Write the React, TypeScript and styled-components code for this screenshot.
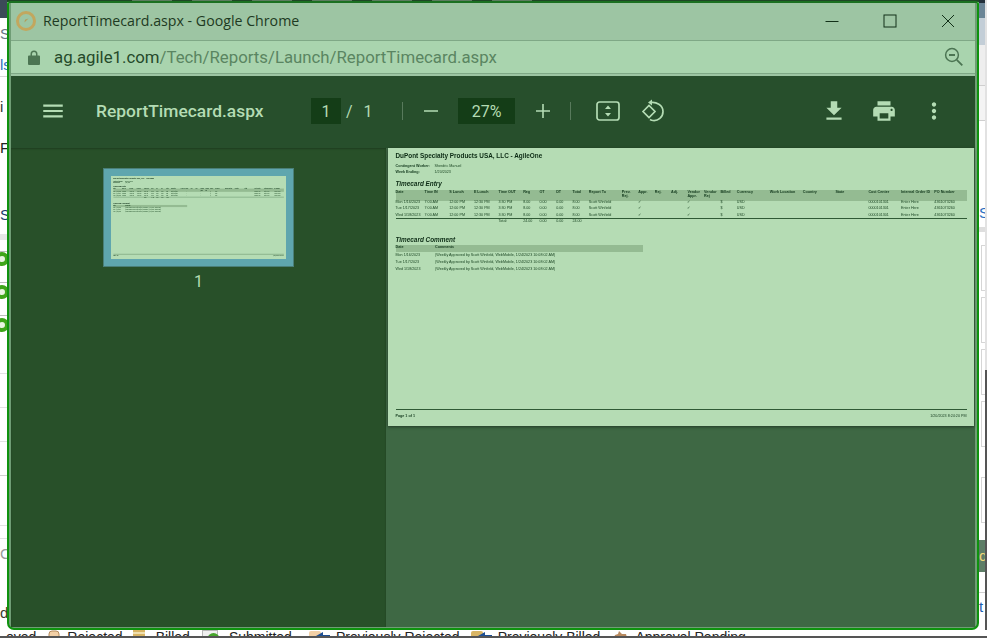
import React from 'react';
import styled, { createGlobalStyle } from 'styled-components';

const GlobalStyle = createGlobalStyle`
  html, body {
    margin: 0;
    padding: 0;
    background: #fff;
    font-family: "Liberation Sans", Arial, sans-serif;
  }
`;

interface StripItem {
  h: number;
  bg?: string;
  text?: string;
  color?: string;
  check?: boolean;
  box?: boolean;
}

const leftStrip: StripItem[] = [
  { h: 18, bg: '#3c4a58' },
  { h: 9 },
  { h: 13, text: 'S', color: '#6b7785' },
  { h: 18 },
  { h: 13, text: 'ls', color: '#2a6fc0' },
  { h: 5 },
  { h: 1, bg: '#d8d8d8' },
  { h: 23 },
  { h: 14, text: 'i', color: '#333' },
  { h: 27 },
  { h: 14, text: 'F', color: '#222' },
  { h: 52 },
  { h: 16, text: 'St', color: '#1c3d6b' },
  { h: 11 },
  { h: 6, bg: '#e6e6e6' },
  { h: 11 },
  { h: 1, bg: '#bdbdbd' },
  { h: 14, check: true },
  { h: 16 },
  { h: 1, bg: '#bdbdbd' },
  { h: 2 },
  { h: 14, check: true },
  { h: 16 },
  { h: 1, bg: '#bdbdbd' },
  { h: 2 },
  { h: 14, check: true },
  { h: 41 },
  { h: 1, bg: '#e2e2e2' },
  { h: 33 },
  { h: 1, bg: '#e2e2e2' },
  { h: 33 },
  { h: 1, bg: '#e2e2e2' },
  { h: 33 },
  { h: 1, bg: '#d0d0d0' },
  { h: 49 },
  { h: 1, bg: '#e2e2e2' },
  { h: 12 },
  { h: 1, bg: '#e2e2e2' },
  { h: 8 },
  { h: 13, text: 'Ca', color: '#9a9a9a' },
  { h: 46 },
  { h: 14, text: 'ds', color: '#3c3c2c' },
];

const rightStrip: StripItem[] = [
  { h: 3, bg: '#222f3a' },
  { h: 15, bg: '#6b8596' },
  { h: 27, bg: '#c3ced7' },
  { h: 40, bg: '#eeeeee' },
  { h: 1, bg: '#cfcfcf' },
  { h: 34, bg: '#f4f4f4' },
  { h: 1, bg: '#cfcfcf' },
  { h: 85 },
  { h: 13, text: 'S', color: '#2a6fc0' },
  { h: 8 },
  { h: 5, bg: '#dedede' },
  { h: 13 },
  { h: 46, box: true },
  { h: 6 },
  { h: 46, box: true },
  { h: 6 },
  { h: 46, box: true },
  { h: 6 },
  { h: 46, box: true },
  { h: 30 },
  { h: 46, box: true },
  { h: 17 },
  { h: 32, bg: '#5d7d66', text: 'd', color: '#f0d777' },
  { h: 20 },
  { h: 1, bg: '#d0d0d0' },
  { h: 7 },
  { h: 14, text: 't', color: '#1e5fb0' },
];

const LegendGlyph: React.FC<{ kind: string }> = ({ kind }) => {
  if (kind === 'rejected') {
    return (
      <LegendSvg width="12" height="8" $gap={7}>
        <path d="M1 8V4q0-3 3-3h4q3 0 3 3v4z" fill="#f3d0a6" stroke="#b58a5c" />
      </LegendSvg>
    );
  }
  if (kind === 'billed') {
    return (
      <LegendSvg width="12" height="8" $gap={11}>
        <path d="M0 0h12v2H0zM0 4h12v2H0z" fill="#d9b564" />
        <path d="M0 2h12v2H0z" fill="#f0dfae" />
      </LegendSvg>
    );
  }
  if (kind === 'submitted') {
    return (
      <LegendSvg width="18" height="8" $gap={9}>
        <rect x="0.500" y="0.500" width="15" height="7" fill="#f0f0f0" stroke="#b8b8b8" />
        <circle cx="11.500" cy="9" r="6" fill="#46a52a" />
      </LegendSvg>
    );
  }
  if (kind === 'prevRejected' || kind === 'prevBilled') {
    const base = kind === 'prevRejected' ? '#f3d0a6' : '#d9b564';
    return (
      <LegendSvg width="21" height="8" $gap={6}>
        <rect x="0" y="1" width="12" height="7" rx="2" fill={base} />
        <path d="M14 2l-7 4 3 2h11V5h-7z" fill="#1d4f94" />
      </LegendSvg>
    );
  }
  if (kind === 'pending') {
    return (
      <LegendSvg width="14" height="8" $gap={8}>
        <path d="M6 1l3 3h4l1 4H1l1-3 3-1z" fill="#b98a5f" />
      </LegendSvg>
    );
  }
  return null;
};

const legend = [
  { label: 'oved', icon: '', offset: 6 },
  { label: 'Rejected', icon: 'rejected', offset: 12 },
  { label: 'Billed', icon: 'billed', offset: 10 },
  { label: 'Submitted', icon: 'submitted', offset: 12 },
  { label: 'Previously Rejected', icon: 'prevRejected', offset: 17 },
  { label: 'Previously Billed', icon: 'prevBilled', offset: 11 },
  { label: 'Approval Pending', icon: 'pending', offset: 13 },
];

const days = ['Mon 1/16/2023', 'Tue 1/17/2023', 'Wed 1/18/2023'];

const headers = [
  'Date', 'Time IN', 'S Lunch', 'E Lunch', 'Time OUT', 'Reg', 'OT', 'DT', 'Total', 'Report To',
  'Prev. Rej.', 'Appr.', 'Rej.', 'Adj.', 'Vendor Appr.', 'Vendor Rej', 'Billed', 'Currency',
  'Work Location', 'Country', 'State', 'Cost Center', 'Internal Order ID', 'PO Number',
];

const rowCells = (day: string) => [
  day, '7:00 AM', '12:00 PM', '12:30 PM', '3:30 PM', '8.00', '0.00', '0.00', '8.00', 'Scott Winfield',
  '', '✓', '', '', '✓', '', '$', 'USD', '', '', '', '0000101301', 'Enter Here', '4361073260',
];

const totalCells = [
  '', '', '', '', 'Total:', '24.00', '0.00', '0.00', '24.00', '', '', '', '', '', '', '', '', '', '', '', '', '', '', '',
];

const ReportSheet: React.FC = () => (
  <SheetBody>
    <SheetTitle>DuPont Specialty Products USA, LLC - AgileOne</SheetTitle>
    <MetaBlock>
      <MetaRow>
        <MetaLabel>Contingent Worker:</MetaLabel>
        <span>Sherdric Manuel</span>
      </MetaRow>
      <MetaRow>
        <MetaLabel>Week Ending:</MetaLabel>
        <span>1/20/2023</span>
      </MetaRow>
    </MetaBlock>
    <SectionTitle>Timecard Entry</SectionTitle>
    <EntryHeader>
      {headers.map((h) => (
        <span key={h}>{h}</span>
      ))}
    </EntryHeader>
    <EntryRows>
      {days.map((day) => (
        <EntryRow key={day}>
          {rowCells(day).map((cell, i) => (
            <span key={i}>{cell}</span>
          ))}
        </EntryRow>
      ))}
    </EntryRows>
    <EntryTotal>
      {totalCells.map((cell, i) => (
        <span key={i}>{cell}</span>
      ))}
    </EntryTotal>
    <CommentTitle>Timecard Comment</CommentTitle>
    <CommentHeader>
      <span>Date</span>
      <span>Comments</span>
    </CommentHeader>
    {days.map((day) => (
      <CommentRow key={day}>
        <span>{day}</span>
        <span>(Weekly Approved by Scott Winfield, WebMobile, 1/24/2023 10:08:02 AM)</span>
      </CommentRow>
    ))}
    <SheetFooter>
      <b>Page 1 of 1</b>
      <span>1/20/2023 8:24:20 PM</span>
    </SheetFooter>
  </SheetBody>
);

const Strip: React.FC<{ items: StripItem[]; scrollbar?: boolean }> = ({ items, scrollbar }) => (
  <StripColumn $scrollbar={scrollbar}>
    {items.map((item, i) => (
      <StripCell key={i} $h={item.h} $bg={item.bg} $color={item.color} $box={item.box}>
        {item.text}
        {item.check && <CheckDot />}
      </StripCell>
    ))}
  </StripColumn>
);

const App: React.FC = () => (
  <Page>
    <GlobalStyle />
    <Strip items={leftStrip} />
    <Behind>
      {[125, 195, 250, 330, 410, 550, 640].map((x, i) => (
        <NavStub key={x} $left={i === 0 ? x : 20} />
      ))}
    </Behind>
    <Strip items={rightStrip} scrollbar />
    <LegendBar>
      {legend.map((item) => (
        <LegendItem key={item.label} $offset={item.offset}>
          <LegendGlyph kind={item.icon} />
          {item.label}
        </LegendItem>
      ))}
    </LegendBar>

    <Window>
      <TitleBar>
        <svg width="22" height="22" viewBox="0 0 22 22">
          <circle cx="11" cy="11" r="8.500" fill="none" stroke="#c2a75e" strokeWidth="3" />
          <path d="M13.500 8.500l-3.500 1.200-.6 2.800z" fill="#b49a55" />
        </svg>
        <WindowTitle>ReportTimecard.aspx - Google Chrome</WindowTitle>
        <WindowControls>
          <svg width="14" height="14" viewBox="0 0 14 14">
            <path d="M0.500 7.500h13" stroke="#123018" strokeWidth="1" />
          </svg>
          <svg width="14" height="14" viewBox="0 0 14 14">
            <rect x="1" y="1" width="12" height="12" fill="none" stroke="#123018" strokeWidth="1" />
          </svg>
          <svg width="14" height="14" viewBox="0 0 14 14">
            <path d="M1 1l12 12M13 1L1 13" stroke="#123018" strokeWidth="1" />
          </svg>
        </WindowControls>
      </TitleBar>
      <AddressBar>
        <svg width="12" height="15" viewBox="0 0 12 15">
          <path d="M2.500 5.500V4a3.500 3.500 0 0 1 7 0v1.500H11a1 1 0 0 1 1 1V14a1 1 0 0 1-1 1H1a1 1 0 0 1-1-1V6.500a1 1 0 0 1 1-1zM4 5.500h4V4a2 2 0 0 0-4 0z" fill="#4c7553" />
        </svg>
        <Url>
          <b>ag.agile1.com</b>/Tech/Reports/Launch/ReportTimecard.aspx
        </Url>
        <svg width="20" height="20" viewBox="0 0 20 20">
          <circle cx="8" cy="8" r="6.400" fill="none" stroke="#4c7553" strokeWidth="1.500" />
          <path d="M5 8h6M12.800 12.800l5.500 5.500" stroke="#4c7553" strokeWidth="1.800" />
        </svg>
      </AddressBar>
      <Toolbar>
        <ToolIcon $size={26} viewBox="0 0 24 24">
          <path d="M3 18h18v-2H3v2zm0-5h18v-2H3v2zm0-7v2h18V6H3z" />
        </ToolIcon>
        <DocTitle>ReportTimecard.aspx</DocTitle>
        <PageGroup>
          <ValueBox $width={30}>1</ValueBox>
          <Slash>/</Slash>
          <PageTotal>1</PageTotal>
        </PageGroup>
        <Separator />
        <ZoomButton $size={24} viewBox="0 0 24 24">
          <path d="M19 12.800H5v-1.600h14z" />
        </ZoomButton>
        <ZoomValue $width={57}>27%</ZoomValue>
        <ZoomButton $size={24} viewBox="0 0 24 24">
          <path d="M19 12.800h-6.200V19h-1.600v-6.200H5v-1.600h6.200V5h1.600v6.200H19z" />
        </ZoomButton>
        <Separator />
        <FitIcon $size={28} viewBox="0 0 28 28">
          <rect x="3" y="5" width="22" height="18" rx="2.500" fill="none" stroke="#b4dcb4" strokeWidth="1.700" />
          <path d="M14 8.500l3 3.500h-6zM14 19.500l3-3.500h-6z" />
        </FitIcon>
        <RotateIcon $size={28} viewBox="0 0 28 28">
          <path d="M4 14.500l6-6 6 6-6 6z" fill="none" stroke="#b4dcb4" strokeWidth="1.700" />
          <path
            d="M12 5.500c5-.6 12 2 12 9 0 6-5 9.500-10 9-1 0-2-.4-3-1"
            fill="none"
            stroke="#b4dcb4"
            strokeWidth="1.700"
          />
          <path d="M13 2.500v6l-4-3z" />
        </RotateIcon>
        <RightTools>
          <ToolIcon $size={26} viewBox="0 0 24 24">
            <path d="M19 9h-4V3H9v6H5l7 7 7-7zM5 18v2h14v-2H5z" />
          </ToolIcon>
          <ToolIcon $size={26} viewBox="0 0 24 24">
            <path d="M19 8H5c-1.660 0-3 1.340-3 3v6h4v4h12v-4h4v-6c0-1.660-1.340-3-3-3zm-3 11H8v-5h8v5zm3-7c-.550 0-1-.450-1-1s.450-1 1-1 1 .450 1 1-.450 1-1 1zm-1-9H6v4h12V3z" />
          </ToolIcon>
          <ToolIcon $size={26} viewBox="0 0 24 24">
            <path d="M12 8c1.100 0 2-.900 2-2s-.900-2-2-2-2 .900-2 2 .900 2 2 2zm0 2c-1.100 0-2 .900-2 2s.900 2 2 2 2-.900 2-2-.900-2-2-2zm0 6c-1.100 0-2 .900-2 2s.900 2 2 2 2-.900 2-2-.900-2-2-2z" />
          </ToolIcon>
        </RightTools>
      </Toolbar>
      <ViewerArea>
        <Sidebar>
          <Thumb>
            <ThumbPage>
              <ThumbScale>
                <ReportSheet />
              </ThumbScale>
            </ThumbPage>
          </Thumb>
          <ThumbLabel>1</ThumbLabel>
        </Sidebar>
        <Viewer>
          <Sheet>
            <ReportSheet />
          </Sheet>
        </Viewer>
      </ViewerArea>
    </Window>
  </Page>
);

const Page = styled.div`
  position: relative;
  width: 987px;
  height: 638px;
  overflow: hidden;
  display: grid;
  grid-template-columns: 7px 1fr 8px;
  grid-template-rows: 630px 8px;
  background: #fff;
`;

const StripColumn = styled.div<{ $scrollbar?: boolean }>`
  display: flex;
  flex-direction: column;
  overflow: hidden;
  background: #fff;
  box-sizing: border-box;
  ${(p) =>
    p.$scrollbar &&
    `
    border-right: 2px solid;
    border-image: linear-gradient(#e2e2e2 0 370px, #555 370px) 1;
  `}
`;

const StripCell = styled.div<{ $h: number; $bg?: string; $color?: string; $box?: boolean }>`
  flex: none;
  box-sizing: border-box;
  height: ${(p) => p.$h}px;
  line-height: ${(p) => p.$h}px;
  background: ${(p) => p.$bg || 'transparent'};
  color: ${(p) => p.$color || '#333'};
  font-size: 15px;
  white-space: nowrap;
  overflow: hidden;
  ${(p) => p.$box && 'border: 1px solid #d6d6d6; border-right: 0; margin-left: 2px;'}
`;

const CheckDot = styled.div`
  width: 14px;
  height: 14px;
  margin-left: -5px;
  border-radius: 50%;
  box-sizing: border-box;
  border: 4px solid #3fa51a;
  background: #e9f4e2;
`;

const Behind = styled.div`
  display: flex;
  height: 2px;
  background: #1f4626;
`;

const NavStub = styled.span<{ $left: number }>`
  width: 40px;
  height: 1px;
  margin-left: ${(p) => p.$left}px;
  background: #5c7c60;
`;

const LegendBar = styled.div`
  grid-column: 1 / 4;
  display: flex;
  height: 8px;
  box-sizing: border-box;
  border-bottom: 2px solid #555;
  overflow: hidden;
  font-size: 14px;
  line-height: 16px;
  color: #222;
  white-space: nowrap;
`;

const LegendItem = styled.div<{ $offset: number }>`
  display: flex;
  align-items: flex-start;
  margin-left: ${(p) => p.$offset}px;
  margin-top: -1px;
`;

const LegendSvg = styled.svg<{ $gap: number }>`
  flex: none;
  margin-top: 1px;
  margin-right: ${(p) => p.$gap}px;
`;

const Window = styled.div`
  position: absolute;
  left: 7px;
  top: 1px;
  width: 972px;
  height: 629px;
  box-sizing: border-box;
  border: 2px solid #0e920e;
  border-top-color: #1b7021;
  border-radius: 3px 3px 7px 7px;
  display: flex;
  flex-direction: column;
  overflow: hidden;
  background: #6f9d75;
  padding: 0 2px 1px;
`;

const TitleBar = styled.div`
  display: flex;
  align-items: center;
  height: 38px;
  flex: none;
  box-sizing: border-box;
  padding: 0 20px 2px 4px;
  background: #9dc5a3;
  border-bottom: 1px solid #7fa886;
`;

const WindowTitle = styled.span`
  margin-left: 6px;
  font-family: "Open Sans", sans-serif;
  font-size: 14.200px;
  color: #1d3a22;
`;

const WindowControls = styled.div`
  display: flex;
  gap: 44px;
  margin-left: auto;
`;

const AddressBar = styled.div`
  display: flex;
  align-items: center;
  flex: none;
  height: 33px;
  box-sizing: border-box;
  padding: 0 11px 0 17px;
  background: #a9d4ae;
  border-bottom: 1px solid #7fa886;
`;

const Url = styled.span`
  margin-left: 14px;
  font-family: Roboto, sans-serif;
  font-size: 16.800px;
  color: #5a8561;
  flex: 1;
  b {
    font-weight: 400;
    color: #254a2a;
  }
`;

const Toolbar = styled.div`
  display: flex;
  align-items: center;
  flex: none;
  height: 74px;
  box-sizing: border-box;
  padding: 0 28px 2px 29px;
  background: #274f2c;
  border-top: 2px solid #9dc5a3;
  color: #b4dcb4;
  font-family: Roboto, sans-serif;
`;

const ToolIcon = styled.svg<{ $size: number }>`
  flex: none;
  width: ${(p) => p.$size}px;
  height: ${(p) => p.$size}px;
  fill: #b4dcb4;
`;

const ZoomButton = styled(ToolIcon)`
  margin: 0 15.500px;
`;

const FitIcon = styled(ToolIcon)`
  margin-left: 23px;
`;

const RotateIcon = styled(ToolIcon)`
  margin-left: 17px;
`;

const DocTitle = styled.span`
  width: 215px;
  margin-left: 30px;
  flex: none;
  font-size: 17.400px;
  font-weight: 500;
`;

const PageGroup = styled.div`
  display: flex;
  align-items: center;
  width: 91px;
  flex: none;
  font-size: 16px;
`;

const ValueBox = styled.div<{ $width: number }>`
  flex: none;
  display: flex;
  align-items: center;
  justify-content: center;
  width: ${(p) => p.$width}px;
  height: 26px;
  background: #143d17;
  font-size: 16px;
`;

const ZoomValue = styled(ValueBox)`
  margin: 0;
`;

const Slash = styled.span`
  margin-left: 5px;
`;

const PageTotal = styled.span`
  margin-left: 11px;
`;

const Separator = styled.div`
  flex: none;
  width: 1px;
  height: 18px;
  background: #587a5c;
`;

const RightTools = styled.div`
  display: flex;
  align-items: center;
  gap: 24px;
  margin-left: auto;
`;

const ViewerArea = styled.div`
  flex: 1;
  display: flex;
  min-height: 0;
`;

const Sidebar = styled.div`
  width: 375px;
  flex: none;
  display: flex;
  flex-direction: column;
  align-items: center;
  padding-top: 20px;
  box-sizing: border-box;
  background: #285029;
  box-shadow: inset 0 1px 2px rgba(0, 0, 0, 0.25);
  color: #b4dcb4;
  font-family: Roboto, sans-serif;
`;

const Thumb = styled.div`
  box-sizing: content-box;
  border: 8px solid #5fa6ae;
  outline: 1px solid #4a7f78;
  outline-offset: -1px;
`;

const ThumbPage = styled.div`
  width: 175px;
  height: 83px;
  overflow: hidden;
  background: #b5dcb4;
`;

const ThumbScale = styled.div`
  width: 586px;
  height: 278px;
  transform: scale(0.2986);
  transform-origin: 0 0;
`;

const ThumbLabel = styled.div`
  margin-top: 6px;
  font-size: 16px;
  line-height: 18px;
`;

const Viewer = styled.div`
  flex: 1;
  min-width: 0;
  padding-left: 2px;
  background: #3e6844;
`;

const Sheet = styled.div`
  width: 586px;
  height: 278px;
  background: #b5dcb4;
  box-shadow: 0 1px 3px rgba(0, 0, 0, 0.45);
`;

const SheetBody = styled.div`
  width: 586px;
  height: 278px;
  box-sizing: border-box;
  padding: 4px 7.500px 8px;
  display: flex;
  flex-direction: column;
  font-size: 3.700px;
  line-height: 3.600px;
  color: #1d4725;
  filter: blur(0.3px);
`;

const SheetTitle = styled.div`
  font-size: 6.400px;
  font-weight: 700;
  line-height: 8px;
  color: #0c2b14;
`;

const MetaBlock = styled.div`
  margin-top: 4px;
`;

const MetaRow = styled.div`
  display: flex;
  height: 5.500px;
  line-height: 5.500px;
`;

const MetaLabel = styled.b`
  width: 39px;
  flex: none;
  color: #143a1e;
`;

const SectionTitle = styled.div`
  margin-top: 4.700px;
  font-size: 6.400px;
  line-height: 8px;
  font-weight: 700;
  font-style: italic;
  color: #0c2b14;
`;

const CommentTitle = styled(SectionTitle)`
  margin-top: 12.600px;
`;

const entryColumns =
  '29px 24.700px 24.700px 24.600px 24.700px 16.300px 16.700px 16.300px 16.400px 33px 16.300px 16.700px 16.300px 16.300px 16.700px 16.300px 16.400px 33px 33px 32.600px 33px 32.700px 33.300px 32.400px';

const EntryHeader = styled.div`
  display: grid;
  grid-template-columns: ${entryColumns};
  height: 11px;
  box-sizing: border-box;
  margin-top: 2.300px;
  padding-top: 1.500px;
  background: #94bb92;
  font-weight: 700;
  color: #143a1e;
`;

const EntryRows = styled.div`
  height: 17.500px;
  border-bottom: 1.500px solid #2f5a35;
`;

const EntryRow = styled.div`
  display: grid;
  grid-template-columns: ${entryColumns};
  height: 6.400px;
  white-space: nowrap;
`;

const EntryTotal = styled(EntryRow)`
  height: 3.600px;
  margin-top: 0.500px;
`;

const CommentHeader = styled.div`
  display: grid;
  grid-template-columns: 39.500px 1fr;
  width: 247px;
  height: 7px;
  margin-top: 1.300px;
  line-height: 4.500px;
  background: #94bb92;
  font-weight: 700;
  color: #143a1e;
`;

const CommentRow = styled.div`
  display: grid;
  grid-template-columns: 39.500px 1fr;
  height: 7px;
  line-height: 7px;
`;

const SheetFooter = styled.div`
  display: flex;
  justify-content: space-between;
  margin-top: auto;
  padding-top: 3.500px;
  border-top: 1.500px solid #2f5a35;
  line-height: 4.500px;
  color: #143a1e;
`;

export default App;
